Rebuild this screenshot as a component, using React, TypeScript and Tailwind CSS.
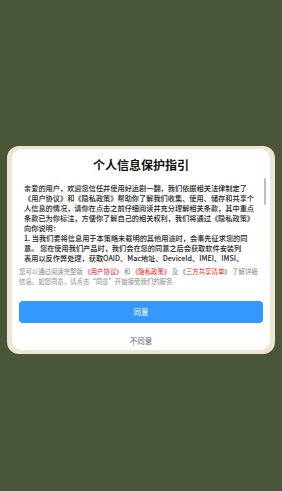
const bodyFont = { fontFamily: '"Noto Sans CJK SC", "Noto Sans", sans-serif' };

const lines = [
  '亲爱的用户，欢迎您信任并使用好运剧一翻，我们依据相关法律制定了',
  '《用户协议》和《隐私政策》帮助你了解我们收集、使用、储存和共享个',
  '人信息的情况，请你在点击之前仔细阅读并充分理解相关条款，其中重点',
  '条款已为你标注，方便你了解自己的相关权利，我们将通过《隐私政策》',
  '向你说明：',
  '1. 当我们要将信息用于本策略未载明的其他用途时，会事先征求您的同',
  '意。 您在使用我们产品时，我们会在您的同意之后会获取软件安装列',
  '表用以反作弊处理，获取OAID、Mac地址、DeviceId、IMEI、IMSI、',
  'AndroidId等设备信息用于统计分析和广告投放。',
];

function ScrollBody() {
  return (
    <div className="relative mt-[5px] h-[84px] overflow-hidden">
      <div className="px-[12px] pt-[5px] text-[7.2px] leading-[10px] font-medium text-[#222]">
        {lines.map((l, i) => (
          <p key={i} className="whitespace-nowrap">{l}</p>
        ))}
      </div>
      <div className="absolute right-[4px] top-0 h-[27px] w-[2px] rounded-full bg-[#bdbdbd]" />
    </div>
  );
}

export default function App() {
  return (
    <div className="h-[491px] w-[282px] bg-[#4a5638] px-[7px] pt-[146px]" style={bodyFont}>
      <div className="rounded-[12px] bg-[#efe5d4] px-[5px] pt-[3px] pb-[4px]">
        <div className="flex h-[201px] flex-col rounded-[10px] bg-white">
          <h1 className="pt-[8px] text-center text-[12px] leading-[16px] font-bold text-[#111]">
            个人信息保护指引
          </h1>
          <ScrollBody />
          <p className="mt-[5px] px-[7px] text-[6.4px] leading-[10px] text-[#888]">
            您可以通过阅读完整版 <span className="text-[#e0201b]">《用户协议》</span> 和 <span className="text-[#e0201b]">《隐私政策》</span> 及 <span className="text-[#e0201b]">《三方共享清单》</span> 了解详细信息。如您同意，请点击“同意”开始接受我们的服务
          </p>
          <div className="mt-[9px] px-[7px]">
            <button className="h-[22px] w-full rounded-[4px] bg-[#3399ff] text-[7.5px] text-white">同意</button>
          </div>
          <p className="mt-[13px] text-center text-[7.5px] leading-[10px] text-[#666]">不同意</p>
        </div>
      </div>
    </div>
  );
}
